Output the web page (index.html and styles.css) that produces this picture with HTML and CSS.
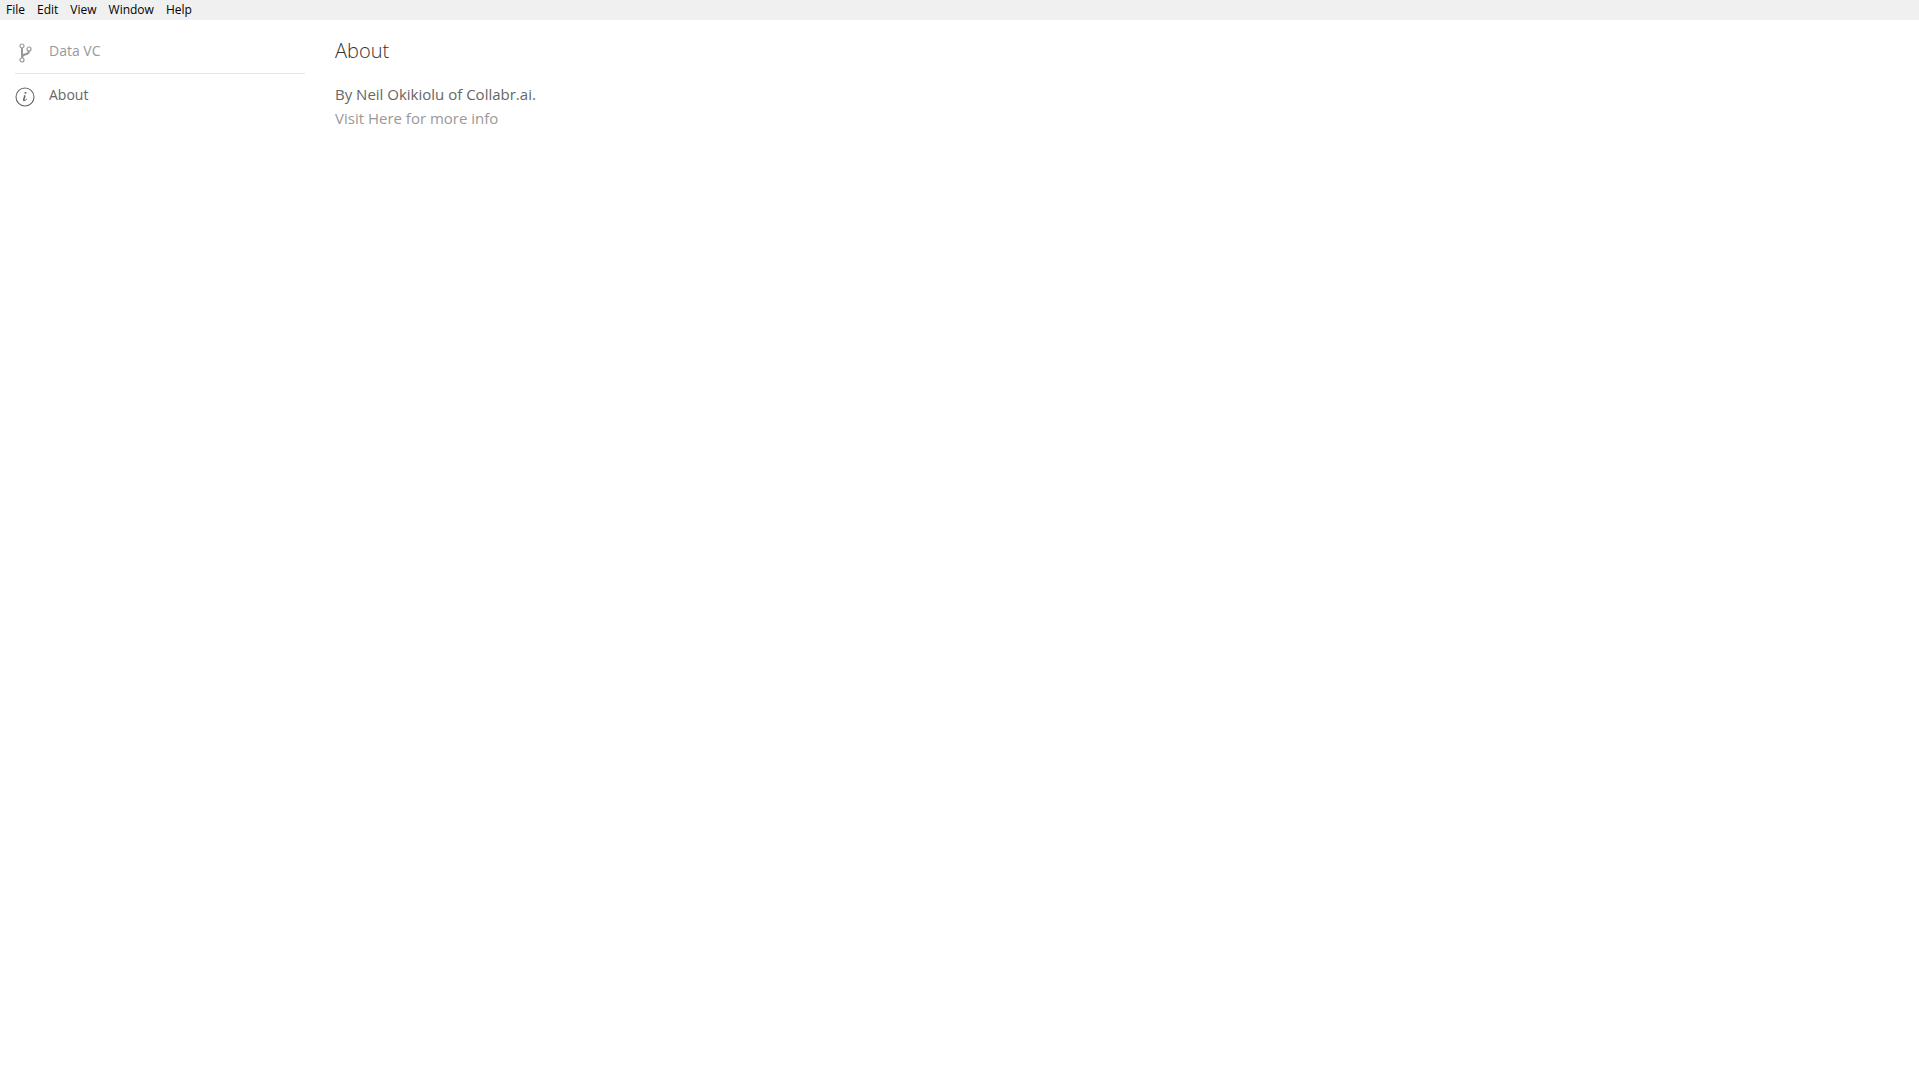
FILE: index.html
```
<!DOCTYPE html>
<html lang="en">
<head>
    <meta charset="UTF-8">
    <meta name="viewport" content="width=device-width, initial-scale=1.0">
    <title>Data VC</title>
    <link rel="stylesheet" href="styles.css">
</head>
<body>
    <div class="menu-bar">
        <button>File</button>
        <button>Edit</button>
        <button>View</button>
        <button>Window</button>
        <button>Help</button>
    </div>

    <div class="container">
        <nav class="sidebar">
            <ul>
                <li>
                    <a href="#data-vc">
                        <svg width="20" height="20" viewBox="0 0 20 20" fill="none" stroke="currentColor">
                            <circle stroke-width="1.2" cx="7" cy="3" r="2"/>
                            <circle stroke-width="1.2" cx="14" cy="6" r="2"/>
                            <circle stroke-width="1.2" cx="7" cy="17" r="2"/>
                            <path stroke-width="2" d="M14,8 C14,10.41 12.43,10.87 10.56,11.25 C9.09,11.54 7,12.06 7,15 L7,5"/>
                        </svg>
                        <span>Data VC</span>
                    </a>
                </li>
                <li class="divider"></li>
                <li class="active">
                    <a href="#about">
                        <svg width="20" height="20" viewBox="0 0 20 20" fill="currentColor">
                            <path d="M12.13,11.59 C11.97,12.84 10.35,14.12 9.1,14.16 C6.17,14.2 9.89,9.46 8.74,8.37 C9.3,8.16 10.62,7.83 10.62,8.81 C10.62,9.63 10.12,10.55 9.88,11.32 C8.66,15.16 12.13,11.15 12.14,11.18 C12.16,11.21 12.16,11.35 12.13,11.59 Z M11.56,5.67 C11.56,6.67 9.36,7.15 9.36,6.03 C9.36,5 11.56,4.54 11.56,5.67 Z"/>
                            <circle fill="none" stroke="currentColor" stroke-width="1.1" cx="10" cy="10" r="9"/>
                        </svg>
                        <span>About</span>
                    </a>
                </li>
            </ul>
        </nav>

        <main class="content" id="about">
            <h1>About</h1>
            <p>By Neil Okikiolu of Collabr.ai.<br>
            <a href="#info">Visit Here for more info</a></p>
        </main>
    </div>
</body>
</html>
```
FILE: styles.css
```
body {
    font-family: "Segoe UI", "Open Sans", sans-serif;
    font-size: 15px;
    line-height: 24px;
    color: #666;
    background-color: white;
    margin: 0;
}

a {
    color: #999;
    text-decoration: none;
}

.menu-bar {
    display: flex;
    height: 20px;
    background-color: #f0f0f0;
}

.menu-bar button {
    font-family: inherit;
    font-size: 12px;
    line-height: 20px;
    color: black;
    background: none;
    border: none;
    padding: 0 6px;
}

.container {
    display: flex;
    gap: 30px;
    padding: 15px;
}

.sidebar {
    flex: 0 0 290px;
}

.sidebar ul {
    list-style: none;
    margin: 0;
    padding: 0;
}

.sidebar a {
    display: flex;
    align-items: center;
    gap: 14px;
    font-size: 14px;
    padding: 4px 0;
}

.sidebar svg {
    margin-top: 4px;
}

.sidebar .active a {
    color: #666;
}

.sidebar .divider {
    border-top: 1px solid #e5e5e5;
    margin: 6px 0 5px;
}

.content {
    flex: 1;
}

.content h1 {
    font-size: 20px;
    font-weight: 300;
    line-height: 32px;
    color: #333;
    margin: 0 0 15px;
}

.content p {
    margin: 0;
}
```
